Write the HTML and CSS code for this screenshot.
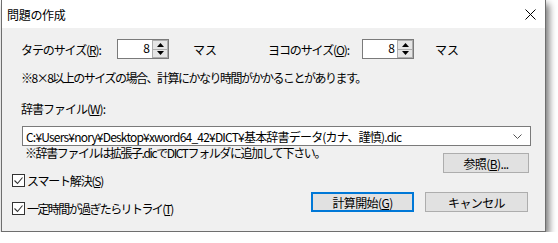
FILE: index.html
```html
<!DOCTYPE html>
<html>
<head>
    <title>問題の作成</title>
    <link rel="stylesheet" href="styles.css">
</head>
<body>
    <div class="window">
        <div class="titlebar">
            <span class="title">問題の作成</span>
            <span class="close">
                <svg width="11" height="11" viewBox="0 0 11 11"><path d="M0.5 0.5L10.5 10.5M10.5 0.5L0.5 10.5" stroke="#000" stroke-width="1"/></svg>
            </span>
        </div>

        <div class="dialog">
            <div class="size-row">
                <label class="size-label">タテのサイズ(<u>R</u>):</label>
                <div class="spin">
                    <span class="spin-value">8</span>
                    <span class="spin-buttons">
                        <span class="spin-btn"><svg width="7" height="4" viewBox="0 0 7 4"><path d="M0 4L3.5 0L7 4Z" fill="#000"/></svg></span>
                        <span class="spin-btn"><svg width="7" height="4" viewBox="0 0 7 4"><path d="M0 0L3.5 4L7 0Z" fill="#000"/></svg></span>
                    </span>
                </div>
                <span class="unit">マス</span>
                <label class="size-label second">ヨコのサイズ(<u>O</u>):</label>
                <div class="spin">
                    <span class="spin-value">8</span>
                    <span class="spin-buttons">
                        <span class="spin-btn"><svg width="7" height="4" viewBox="0 0 7 4"><path d="M0 4L3.5 0L7 4Z" fill="#000"/></svg></span>
                        <span class="spin-btn"><svg width="7" height="4" viewBox="0 0 7 4"><path d="M0 0L3.5 4L7 0Z" fill="#000"/></svg></span>
                    </span>
                </div>
                <span class="unit">マス</span>
            </div>

            <p class="note">※8×8以上のサイズの場合、計算にかなり時間がかかることがあります。</p>

            <label class="dict-label">辞書ファイル(<u>W</u>):</label>
            <div class="combo">
                <span class="combo-text">C:¥Users¥nory¥Desktop¥xword64_42¥DICT¥基本辞書データ(カナ、謹慎).dic</span>
                <svg class="combo-arrow" width="9" height="5" viewBox="0 0 9 5"><path d="M0.5 0.5L4.5 4.5L8.5 0.5" fill="none" stroke="#555" stroke-width="1"/></svg>
            </div>

            <div class="browse-row">
                <span class="hint">※辞書ファイルは拡張子.dicでDICTフォルダに追加して下さい。</span>
                <button class="btn browse">参照(<u>B</u>)...</button>
            </div>

            <div class="bottom-row">
                <div class="checks">
                    <label class="check"><span class="box"><svg width="11" height="11" viewBox="0 0 11 11"><path d="M1.5 5.5L4.5 8.5L9.5 2.5" fill="none" stroke="#333" stroke-width="1.1"/></svg></span>スマート解決(<u>S</u>)</label>
                    <label class="check"><span class="box"><svg width="11" height="11" viewBox="0 0 11 11"><path d="M1.5 5.5L4.5 8.5L9.5 2.5" fill="none" stroke="#333" stroke-width="1.1"/></svg></span>一定時間が過ぎたらリトライ(<u>T</u>)</label>
                </div>
                <div class="actions">
                    <button class="btn primary">計算開始(<u>G</u>)</button>
                    <button class="btn">キャンセル</button>
                </div>
            </div>
        </div>
    </div>
</body>
</html>
```

FILE: styles.css
```css
body {
    margin: 0;
    background-color: #ffffff;
    font-family: "Noto Sans CJK JP", "Noto Sans", sans-serif;
    font-size: 12px;
    color: #000;
}

u {
    text-decoration: underline;
    text-underline-offset: 1px;
}

.window {
    margin-left: 1px;
    width: 543px;
    height: 231px;
    border: 1px solid #6e6e6e;
    border-top: none;
    box-shadow: 3px 4px 7px rgba(0,0,0,0.55);
    background-color: #f0f0f0;
    display: flex;
    flex-direction: column;
}

.titlebar {
    height: 28px;
    background-color: #ffffff;
    display: flex;
    align-items: center;
    justify-content: space-between;
    padding: 0 9px 0 5px;
}

.title {
    font-size: 12px;
    letter-spacing: -0.3px;
}

.close {
    display: flex;
    width: 11px;
    height: 11px;
}

.dialog {
    padding: 11px 14px 0 10px;
    display: flex;
    flex-direction: column;
}

.size-row {
    display: flex;
    align-items: center;
    height: 20px;
    margin-left: 9px;
}

.size-label {
    width: 96px;
    letter-spacing: -1.1px;
}

.size-label.second {
    width: 94px;
}

.spin {
    width: 52px;
    height: 20px;
    box-sizing: border-box;
    border: 1px solid #7a7a7a;
    background-color: #fff;
    display: flex;
}

.spin-value {
    flex: 1;
    text-align: right;
    padding-right: 2px;
    line-height: 16px;
}

.spin-buttons {
    width: 16px;
    display: flex;
    flex-direction: column;
}

.spin-btn {
    flex: 1;
    background-color: #e5e5e5;
    border: 1px solid #adadad;
    display: flex;
    align-items: center;
    justify-content: center;
}

.spin-btn + .spin-btn {
    border-top: none;
}

.unit {
    width: 75px;
    margin-left: 24px;
}

.size-row .unit:last-child {
    margin-left: 21px;
}

.note {
    margin: 12px 0 0 9px;
    line-height: 14px;
    letter-spacing: -1.5px;
}

.dict-label {
    margin: 17px 0 0 9px;
    line-height: 14px;
    letter-spacing: -1px;
}

.combo {
    margin: 10px 0 0 10px;
    height: 20px;
    box-sizing: border-box;
    border: 1px solid #7a7a7a;
    background-color: #fff;
    display: flex;
    align-items: center;
    justify-content: space-between;
    padding: 0 8px 0 3px;
}

.combo-text {
    letter-spacing: -0.8px;
    white-space: nowrap;
}

.browse-row {
    display: flex;
    justify-content: space-between;
    align-items: flex-start;
    margin-left: 13px;
    padding-right: 2px;
}

.hint {
    line-height: 14px;
    letter-spacing: -1.4px;
}

.btn {
    font-family: inherit;
    font-size: 12px;
    background-color: #e1e1e1;
    border: 1px solid #adadad;
    width: 103px;
    height: 20px;
    padding: 0;
    color: #000;
    letter-spacing: -0.6px;
}

.browse {
    width: 86px;
    margin-top: 7px;
}

.bottom-row {
    display: flex;
    justify-content: space-between;
    align-items: flex-start;
    padding-right: 3px;
}

.checks {
    display: flex;
    flex-direction: column;
    gap: 14px;
}

.check {
    display: flex;
    align-items: center;
    height: 14px;
    letter-spacing: -1.2px;
}

.check + .check {
    letter-spacing: -1.6px;
}

.box {
    width: 13px;
    height: 13px;
    box-sizing: border-box;
    border: 1px solid #333;
    background-color: #fff;
    display: flex;
    align-items: center;
    justify-content: center;
    margin-right: 2px;
}

.actions {
    display: flex;
    gap: 11px;
    margin-top: 19px;
}

.primary {
    border: 2px solid #0078d7;
}
```
